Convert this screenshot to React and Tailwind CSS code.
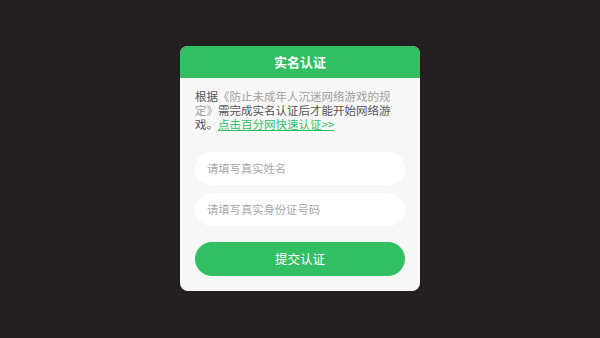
export default function App() {
  return (
    <div
      className="w-[600px] h-[338px] bg-[#231f20] flex justify-center pt-[46px]"
      style={{ fontFamily: '"Noto Sans CJK SC", "Noto Sans", sans-serif' }}
    >
      <div className="w-[240px] h-[245px] bg-[#f7f7f7] rounded-[8px] overflow-hidden flex flex-col">
        <div className="h-[32px] bg-[#32bf63] flex items-center justify-center text-white font-bold text-[13px]">
          实名认证
        </div>
        <div className="px-[15px] pt-[11px] flex flex-col">
          <p className="w-[200px] text-[11.5px] leading-[14px] text-[#555]">
            根据<span className="text-[#a0a0a0]">《防止未成年人沉迷网络游戏的规定》</span>需完成实名认证后才能开始网络游戏。
            <span className="text-[#32bf63] underline">点击百分网快速认证&gt;&gt;</span>
          </p>
          <div className="mt-[21px] h-[33px] rounded-full bg-white flex items-center pl-[12px] text-[11.3px] text-[#a8a8a8]">
            请填写真实姓名
          </div>
          <div className="mt-[8px] h-[33px] rounded-full bg-white flex items-center pl-[12px] text-[11.3px] text-[#a8a8a8]">
            请填写真实身份证号码
          </div>
          <div className="mt-[16px] h-[34px] rounded-full bg-[#32bf63] flex items-center justify-center text-white text-[12.5px]">
            提交认证
          </div>
        </div>
      </div>
    </div>
  );
}
